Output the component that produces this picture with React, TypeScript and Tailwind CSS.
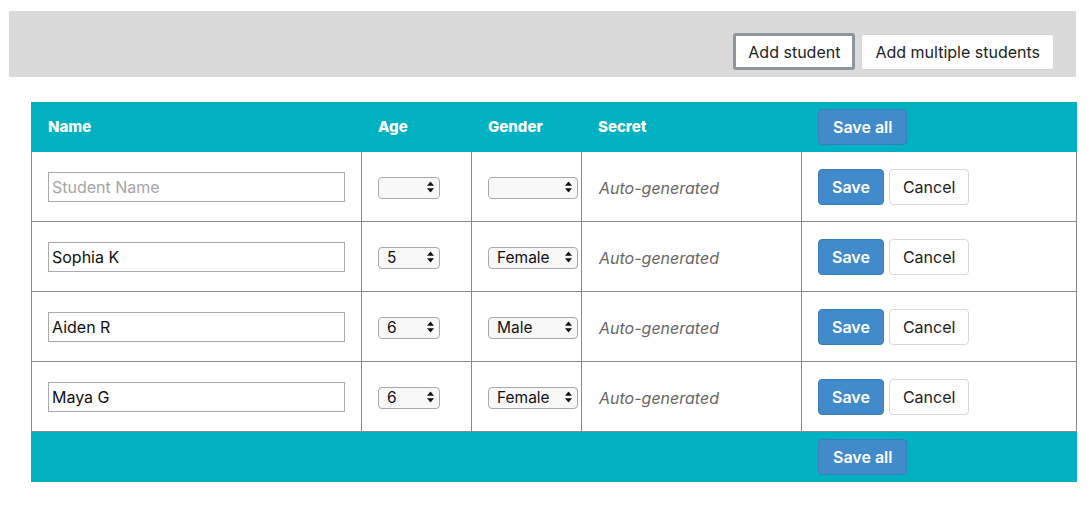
import { useState } from 'react';

type Student = { id: number; name: string; age: string; gender: string };

const initialStudents: Student[] = [
  { id: 0, name: '', age: '', gender: '' },
  { id: 1, name: 'Sophia K', age: '5', gender: 'Female' },
  { id: 2, name: 'Aiden R', age: '6', gender: 'Male' },
  { id: 3, name: 'Maya G', age: '6', gender: 'Female' },
];

const UpDown = () => (
  <svg width="7" height="11" viewBox="0 0 7 11" className="pointer-events-none absolute right-[6px] top-1/2 -translate-y-1/2">
    <path d="M3.5 0 L7 4.3 L0 4.3 Z" fill="#111" />
    <path d="M3.5 11 L7 6.7 L0 6.7 Z" fill="#111" />
  </svg>
);

const Select = ({ value, options, width }: { value: string; options: string[]; width: string }) => (
  <div className={`relative ${width}`}>
    <select
      defaultValue={value}
      className="h-[22px] w-full appearance-none rounded-[4px] border border-[#a9a9a9] bg-[#f8f8f8] pl-[8px] text-[15.5px] leading-[20px] text-[#111] outline-none"
    >
      {options.map((o) => (
        <option key={o} value={o}>{o}</option>
      ))}
    </select>
    <UpDown />
  </div>
);

const App = () => {
  const [students] = useState<Student[]>(initialStudents);

  return (
    <div className="min-h-[505px] bg-white px-[9px] pt-[11px] font-['Inter',sans-serif] text-[#222]">
      {/* toolbar */}
      <div className="flex h-[66px] w-[1067px] items-end justify-end gap-[6px] bg-[#dadada] pb-[7px] pr-[22px]">
        <button className="h-[37px] rounded-[3px] border-[3px] border-[#8e969d] bg-white px-[12px] text-[16px] text-[#222]">
          Add student
        </button>
        <button className="h-[36px] rounded-[3px] border border-[#d5d5d5] bg-white px-[13px] text-[16px] text-[#222]">
          Add multiple students
        </button>
      </div>

      <div className="ml-[22px] mt-[25px] w-[1046px]">
        {/* header */}
        <div className="grid h-[50px] grid-cols-[331px_110px_110px_220px_275px] items-center bg-[#00b1c1] text-[15px] font-extrabold text-white">
          <div className="pl-[17px]">Name</div>
          <div className="pl-[16px]">Age</div>
          <div className="pl-[16px]">Gender</div>
          <div className="pl-[16px]">Secret</div>
          <div className="pl-[16px]">
            <button className="h-[36px] rounded-[4px] border border-[#3a7fbd] bg-[#428bca] px-[14px] text-[16px] font-semibold text-white">
              Save all
            </button>
          </div>
        </div>

        {/* rows */}
        {students.map((s) => (
          <div key={s.id} className="grid h-[70px] grid-cols-[331px_110px_110px_220px_275px] border-b border-[#8a8a8a]">
            <div className="flex items-center border-x border-[#8a8a8a] pl-[16px]">
              <input
                defaultValue={s.name}
                placeholder="Student Name"
                className="h-[30px] w-[297px] border border-[#aaa] px-[3px] text-[16px] text-[#111] outline-none placeholder:text-[#a5a5a5]"
              />
            </div>
            <div className="flex items-center border-r border-[#8a8a8a] pl-[16px]">
              <Select value={s.age} options={['', '4', '5', '6', '7']} width="w-[62px]" />
            </div>
            <div className="flex items-center border-r border-[#8a8a8a] pl-[16px]">
              <Select value={s.gender} options={['', 'Female', 'Male']} width="w-[90px]" />
            </div>
            <div className="flex items-center border-r border-[#8a8a8a] pl-[17px] pt-[2px] text-[16px] italic text-[#666]">
              Auto-generated
            </div>
            <div className="flex items-center gap-[5px] border-r border-[#8a8a8a] pl-[16px] pt-[1px]">
              <button className="h-[36px] rounded-[4px] border border-[#3a7fbd] bg-[#428bca] px-[13px] text-[16px] font-semibold text-white">
                Save
              </button>
              <button className="h-[36px] rounded-[4px] border border-[#d8d8d8] bg-white px-[13px] text-[16px] text-[#222]">
                Cancel
              </button>
            </div>
          </div>
        ))}

        {/* footer */}
        <div className="grid h-[50px] grid-cols-[331px_110px_110px_220px_275px] items-center bg-[#00b1c1]">
          <div />
          <div />
          <div />
          <div />
          <div className="pl-[16px]">
            <button className="h-[36px] rounded-[4px] border border-[#3a7fbd] bg-[#428bca] px-[14px] text-[16px] font-semibold text-white">
              Save all
            </button>
          </div>
        </div>
      </div>
    </div>
  );
};

export default App;
